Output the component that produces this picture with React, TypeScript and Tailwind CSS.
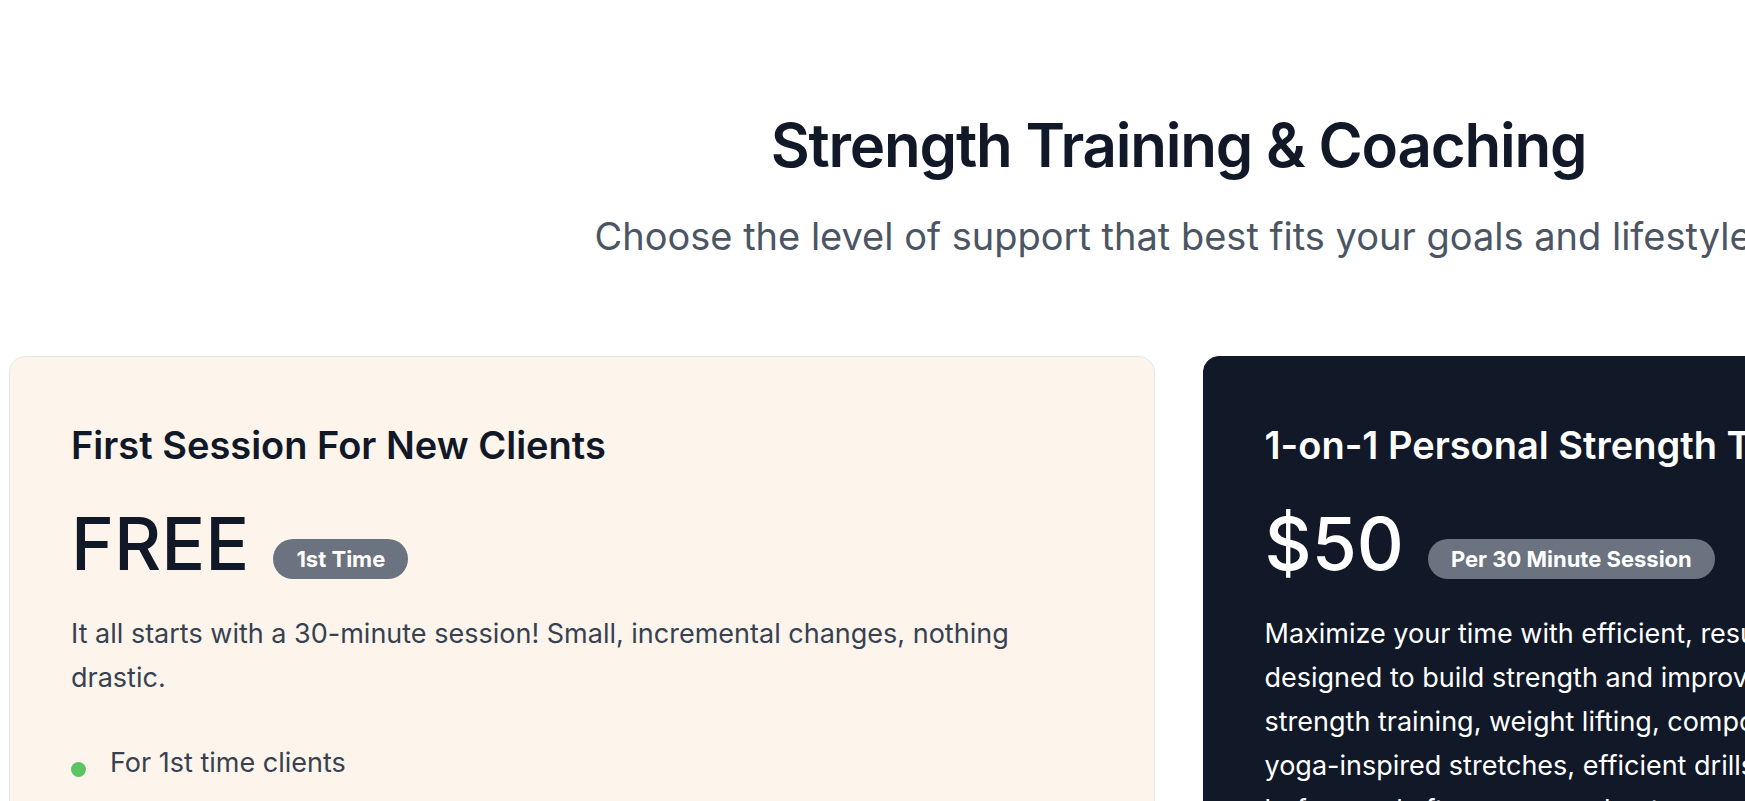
const firstPerks = [
  'For 1st time clients',
  'Movement & mobility check',
  'Goal setting conversation',
]

function Badge({ children }: { children: React.ReactNode }) {
  return (
    <span className="mb-[1px] rounded-full bg-[#6b7280] px-[23px] py-1.5 text-[22px] leading-7 font-bold text-white">
      {children}
    </span>
  )
}

export default function App() {
  return (
    <div className="h-screen w-full overflow-hidden bg-white font-[Inter,sans-serif]">
      <section className="w-[2356px] pr-2 pl-[9px] pt-[115px]">
        <div className="text-center">
          <h1 className="text-6xl leading-none font-semibold tracking-[-1.2px] text-[#111827]">
            Strength Training &amp; Coaching
          </h1>
          <p className="mt-[41px] text-[38px] leading-10 text-[#4b5563]">
            Choose the level of support that best fits your goals and lifestyle.
          </p>
        </div>

        <div className="mt-[100px] grid grid-cols-2 gap-12">
          {/* intro session */}
          <div className="rounded-2xl border border-[#e5e7eb] bg-[#fdf5eb] px-[61px] pt-[68px] pb-16">
            <h2 className="text-[38px] leading-10 font-semibold text-[#111827]">
              First Session For New Clients
            </h2>
            <div className="mt-[43px] flex items-end gap-6">
              <span className="text-[73px] leading-[72px] font-medium text-[#111827]">FREE</span>
              <Badge>1st Time</Badge>
            </div>
            <p className="mt-8 text-[27px] leading-[44px] text-[#374151]">
              It all starts with a 30-minute session! Small, incremental changes, nothing drastic.
            </p>
            <ul className="mt-[41px] space-y-2">
              {firstPerks.map((perk) => (
                <li key={perk} className="flex items-start gap-6 text-[27px] leading-[44px] text-[#374151]">
                  <span className="mt-[21px] h-[15px] w-[15px] shrink-0 rounded-full bg-[#5cc563]" />
                  {perk}
                </li>
              ))}
            </ul>
          </div>

          {/* personal training */}
          <div className="rounded-2xl border border-[#111827] bg-[#111827] px-[61px] pt-[68px] pb-16">
            <h2 className="text-[38px] leading-10 font-semibold text-white">
              1-on-1 Personal Strength Training
            </h2>
            <div className="mt-[43px] flex items-end gap-6">
              <span className="text-[73px] leading-[72px] font-medium text-white">$50</span>
              <Badge>Per 30 Minute Session</Badge>
            </div>
            <p className="mt-8 text-[27px] leading-[44px] text-white">
              Maximize your time with efficient, results-driven sessions
              <br />
              designed to build strength and improve mobility. Each session blends
              <br />
              strength training, weight lifting, compound movements, and
              <br />
              yoga-inspired stretches, efficient drills, and practical coaching
              <br />
              before and after every workout so you keep progressing.
            </p>
          </div>
        </div>
      </section>
    </div>
  )
}
